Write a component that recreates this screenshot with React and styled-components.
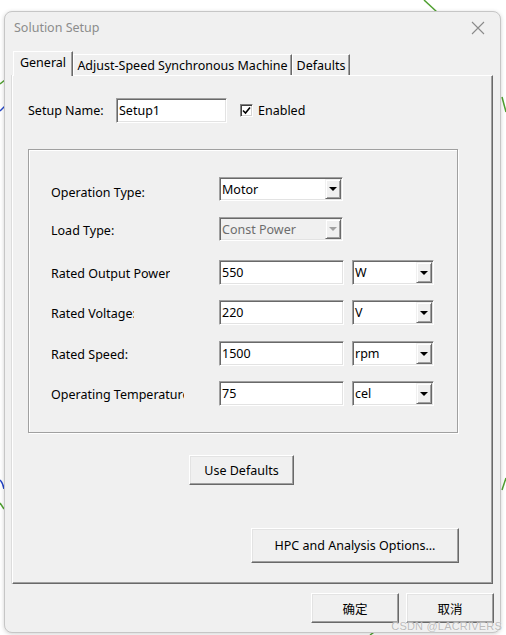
import React from 'react'
import styled, { createGlobalStyle } from 'styled-components'

const GlobalStyle = createGlobalStyle`
  html, body {
    margin: 0;
    padding: 0;
    background: #ffffff;
  }
  body {
    font-family: "Noto Sans", "Noto Sans CJK SC", sans-serif;
    font-size: 12.5px;
    color: #000;
  }
  * {
    box-sizing: border-box;
  }
`

const ScPage = styled.div`
  position: relative;
  width: 506px;
  height: 635px;
  overflow: hidden;
  padding: 11px 0 0 4px;
`

const ScBackdrop = styled.svg`
  position: absolute;
  left: 0;
  top: 0;
  width: 506px;
  height: 635px;
  z-index: 0;
`

const ScWindow = styled.div`
  position: relative;
  z-index: 1;
  width: 497px;
  height: 622px;
  display: flex;
  flex-direction: column;
  background: #f0f0f0;
  border: 1px solid #c6c6c6;
  border-radius: 8px;
  box-shadow: 0 1px 4px rgba(0, 0, 0, 0.18);
  padding: 0 7px;
`

const ScTitleBar = styled.div`
  height: 31px;
  display: flex;
  align-items: center;
  justify-content: space-between;
  padding: 0 1px 0 2px;
  color: #8c8c8c;
  font-size: 12.5px;
`

const ScTabStrip = styled.div`
  margin-top: 8px;
  height: 24px;
  display: flex;
  align-items: flex-start;
  padding-left: 1px;
`

const ScTab = styled.div`
  position: relative;
  width: ${p => p.width}px;
  height: ${p => (p.$active ? 25 : 21)}px;
  margin-top: ${p => (p.$active ? 0 : 3)}px;
  z-index: ${p => (p.$active ? 2 : 1)};
  display: flex;
  align-items: center;
  justify-content: center;
  padding-bottom: ${p => (p.$active ? 3 : 0)}px;
  background: #f0f0f0;
  border-top: 1px solid #fff;
  border-left: 1px solid #fff;
  border-right: 1px solid #696969;
  box-shadow: inset -1px 0 0 #a0a0a0;
  white-space: nowrap;
`

const ScPanel = styled.div`
  width: 481px;
  height: 509px;
  display: flex;
  flex-direction: column;
  padding: 22px 0 0 15px;
  border-top: 1px solid #fff;
  border-left: 1px solid #fff;
  border-right: 1px solid #696969;
  border-bottom: 1px solid #696969;
  box-shadow: inset -1px -1px 0 #a0a0a0, -1px 0 0 #dcdcdc;
`

const ScSetupRow = styled.div`
  display: flex;
  align-items: center;
  height: 25px;
`

const ScLabel = styled.div`
  width: ${p => p.width}px;
  flex: none;
  white-space: nowrap;
  color: ${p => (p.$dim ? '#6d6d6d' : '#000')};
`

const ScClip = styled.span`
  display: inline-block;
  vertical-align: top;
  overflow: hidden;
  max-width: ${p => (p.clip ? `${p.clip}px` : 'none')};
  padding-top: ${p => p.$drop || 0}px;
`

const ScSunken = styled.div`
  position: relative;
  width: ${p => p.width}px;
  height: ${p => p.height}px;
  flex: none;
  display: flex;
  align-items: center;
  padding-left: 2px;
  background: ${p => (p.$disabled ? '#f0f0f0' : '#fff')};
  color: ${p => (p.$disabled ? '#6d6d6d' : '#000')};
  border-top: 1px solid #a0a0a0;
  border-left: 1px solid #a0a0a0;
  border-right: 1px solid #fff;
  border-bottom: 1px solid #fff;
  box-shadow: inset 1px 1px 0 #696969, inset -1px -1px 0 #e3e3e3;
  white-space: nowrap;
`

const ScDropButton = styled.div`
  position: absolute;
  top: 1px;
  right: 1px;
  bottom: 1px;
  width: 16px;
  display: flex;
  align-items: center;
  justify-content: center;
  background: #f0f0f0;
  border-top: 1px solid #f0f0f0;
  border-left: 1px solid #f0f0f0;
  border-right: 1px solid #696969;
  border-bottom: 1px solid #696969;
  box-shadow: inset 1px 1px 0 #fff, inset -1px -1px 0 #a0a0a0;

  &::after {
    content: '';
    width: 0;
    height: 0;
    border-left: 4px solid transparent;
    border-right: 4px solid transparent;
    border-top: 4px solid ${p => (p.$disabled ? '#a0a0a0' : '#000')};
  }
`

const ScCheckBox = styled.div`
  width: 13px;
  height: 13px;
  margin-left: 13px;
  display: flex;
  align-items: center;
  justify-content: center;
  background: #fff;
  border-top: 1px solid #808080;
  border-left: 1px solid #808080;
  border-right: 1px solid #fff;
  border-bottom: 1px solid #fff;
  box-shadow: inset 1px 1px 0 #404040, inset -1px -1px 0 #d4d4d4;
`

const ScCheckText = styled.span`
  margin-left: 5px;
`

const ScGroup = styled.div`
  margin-top: 26px;
  width: 430px;
  height: 284px;
  display: flex;
  flex-direction: column;
  padding: 27px 0 0 22px;
  border: 1px solid #a0a0a0;
  box-shadow: 1px 1px 0 #fff, inset 1px 1px 0 #fff;
`

const ScFieldRow = styled.div`
  display: flex;
  align-items: center;
  margin-top: ${p => p.top}px;
`

const ScUnit = styled.div`
  margin-left: 8px;
  display: flex;
`

const ScButtonRow = styled.div`
  display: flex;
  width: ${p => p.width}px;
  justify-content: ${p => p.justify || 'flex-start'};
  padding-left: ${p => p.indent || 0}px;
  margin-top: ${p => p.top}px;
`

const ScButton = styled.div`
  width: ${p => p.width}px;
  height: ${p => p.height}px;
  display: flex;
  align-items: center;
  justify-content: center;
  background: #f0f0f0;
  border-top: 1px solid #fff;
  border-left: 1px solid #fff;
  border-right: 1px solid #696969;
  border-bottom: 1px solid #696969;
  box-shadow: inset -1px -1px 0 #a0a0a0, inset 1px 1px 0 #e3e3e3;
  white-space: nowrap;
`

const ScFooter = styled.div`
  margin-top: 9px;
  display: flex;
  justify-content: flex-end;
  gap: 7px;
  padding-right: -1px;
  margin-right: -1px;
`

const ScWatermark = styled.div`
  position: absolute;
  right: 4px;
  bottom: 3px;
  z-index: 3;
  font-family: "Liberation Sans", sans-serif;
  font-size: 11px;
  letter-spacing: 0.2px;
  color: rgba(175, 175, 175, 0.85);
  text-shadow: 0 0 1px #fff;
`

const Combo = ({ width, height = 24, value, disabled }) => (
  <ScSunken width={width} height={height} $disabled={disabled}>
    {value}
    <ScDropButton $disabled={disabled} />
  </ScSunken>
)

const rows = [
  { label: 'Rated Output Power:', clip: 119, value: '550', unit: 'W', top: 19 },
  { label: 'Rated Voltage:', clip: 83, value: '220', unit: 'V', top: 15 },
  { label: 'Rated Speed:', value: '1500', unit: 'rpm', top: 16 },
  { label: 'Operating Temperature:', clip: 133, value: '75', unit: 'cel', top: 15 },
]

export default function App() {
  return (
    <>
      <GlobalStyle />
      <ScPage>
        <ScBackdrop viewBox="0 0 506 635">
          <g fill="none" strokeWidth="1.5">
            <path d="M424 0 L437 12" stroke="#4fa030" />
            <path d="M0 84 L5 80" stroke="#4fa030" />
            <path d="M0 111 L5 106" stroke="#2446c8" />
            <path d="M502 97 L506 112" stroke="#4fa030" />
            <path d="M0 480 Q3 483 4 489" stroke="#2446c8" />
            <path d="M0 503 L4 509" stroke="#4fa030" />
            <path d="M502 490 L506 478" stroke="#4fa030" />
            <path d="M370 635 L377 630" stroke="#4fa030" />
          </g>
        </ScBackdrop>

        <ScWindow>
          <ScTitleBar>
            <span>Solution Setup</span>
            <svg width="26" height="14" viewBox="0 0 26 14">
              <path d="M6 1 L18 13 M18 1 L6 13" stroke="#8a8a8a" strokeWidth="1.1" />
            </svg>
          </ScTitleBar>

          <ScTabStrip>
            <ScTab width={60} $active>General</ScTab>
            <ScTab width={219}>Adjust-Speed Synchronous Machine</ScTab>
            <ScTab width={58}>Defaults</ScTab>
          </ScTabStrip>

          <ScPanel>
            <ScSetupRow>
              <ScLabel width={88}>Setup Name:</ScLabel>
              <ScSunken width={111} height={25}>Setup1</ScSunken>
              <ScCheckBox>
                <svg width="9" height="9" viewBox="0 0 9 9">
                  <path d="M1 4.5 L3.5 7 L8 1.5" fill="none" stroke="#000" strokeWidth="1.6" />
                </svg>
              </ScCheckBox>
              <ScCheckText>Enabled</ScCheckText>
            </ScSetupRow>

            <ScGroup>
              <ScFieldRow top={0}>
                <ScLabel width={168}>
                  <ScClip $drop={6}>Operation Type:</ScClip>
                </ScLabel>
                <Combo width={124} value="Motor" />
              </ScFieldRow>
              <ScFieldRow top={16}>
                <ScLabel width={168}>
                  <ScClip $drop={3}>Load Type:</ScClip>
                </ScLabel>
                <Combo width={124} value="Const Power" disabled />
              </ScFieldRow>
              {rows.map(r => (
                <ScFieldRow key={r.label} top={r.top}>
                  <ScLabel width={168}>
                    <ScClip clip={r.clip} $drop={2}>{r.label}</ScClip>
                  </ScLabel>
                  <ScSunken width={125} height={25}>{r.value}</ScSunken>
                  <ScUnit>
                    <Combo width={82} height={25} value={r.unit} />
                  </ScUnit>
                </ScFieldRow>
              ))}
            </ScGroup>

            <ScButtonRow top={22} indent={161} width={430}>
              <ScButton width={105} height={30}>Use Defaults</ScButton>
            </ScButtonRow>

            <ScButtonRow top={43} width={431} justify="flex-end">
              <ScButton width={208} height={35}>HPC and Analysis Options...</ScButton>
            </ScButtonRow>
          </ScPanel>

          <ScFooter>
            <ScButton width={88} height={30}>确定</ScButton>
            <ScButton width={88} height={30}>取消</ScButton>
          </ScFooter>
        </ScWindow>

        <ScWatermark>CSDN @LACRIVERS</ScWatermark>
      </ScPage>
    </>
  )
}
